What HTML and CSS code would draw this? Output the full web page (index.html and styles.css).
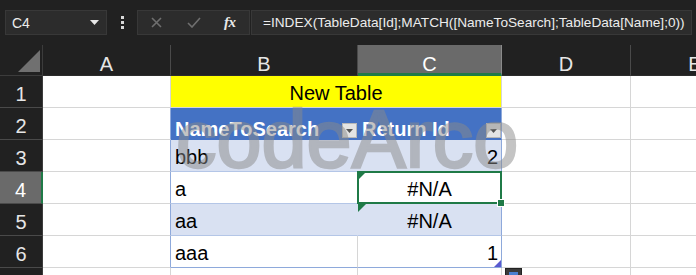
FILE: index.html
```html
<!DOCTYPE html>
<html>
<head>
<meta charset="utf-8">
<link rel="stylesheet" href="styles.css">
</head>
<body>
<div class="app">
  <div class="toolbar">
    <div class="namebox">
      <span class="nb-text">C4</span>
      <svg class="nb-arrow" width="9" height="5" viewBox="0 0 9 5"><path d="M0 0 L9 0 L4.5 5 Z" fill="#e8e8e8"/></svg>
    </div>
    <div class="dots">
      <svg width="3" height="13" viewBox="0 0 3 13"><rect x="0" y="0" width="3" height="3" fill="#d8d8d8"/><rect x="0" y="5" width="3" height="3" fill="#d8d8d8"/><rect x="0" y="10" width="3" height="3" fill="#d8d8d8"/></svg>
    </div>
    <div class="fb-icons">
      <svg class="ic-x" width="11" height="11" viewBox="0 0 11 11"><path d="M1 1 L10 10 M10 1 L1 10" stroke="#6f6f6f" stroke-width="1.6"/></svg>
      <svg class="ic-ok" width="14" height="11" viewBox="0 0 14 11"><path d="M1 6 L5 10 L13 1" stroke="#6f6f6f" stroke-width="1.6" fill="none"/></svg>
      <span class="ic-fx">fx</span>
    </div>
    <div class="formula">=INDEX(TableData[Id];MATCH([NameToSearch];TableData[Name];0))</div>
  </div>

  <div class="sheet">
    <div class="corner"><div class="corner-tri"></div></div>
    <div class="ch">A</div>
    <div class="ch">B</div>
    <div class="ch ch-sel">C</div>
    <div class="ch">D</div>
    <div class="ch">E</div>

    <div class="rh">1</div>
    <div class="c"></div>
    <div class="c title">New Table</div>
    <div class="c"></div>
    <div class="c"></div>

    <div class="rh">2</div>
    <div class="c tedge"></div>
    <div class="c th">NameToSearch<span class="dd"><svg width="7" height="4" viewBox="0 0 7 4"><path d="M0 0 L7 0 L3.5 4 Z" fill="#555"/></svg></span></div>
    <div class="c th thr">Return Id<span class="dd"><svg width="7" height="4" viewBox="0 0 7 4"><path d="M0 0 L7 0 L3.5 4 Z" fill="#555"/></svg></span></div>
    <div class="c"></div>
    <div class="c"></div>

    <div class="rh">3</div>
    <div class="c tedge"></div>
    <div class="c tb band">bbb</div>
    <div class="c tb tbr band num">2</div>
    <div class="c"></div>
    <div class="c"></div>

    <div class="rh rh-sel">4</div>
    <div class="c tedge"></div>
    <div class="c tb">a</div>
    <div class="c tb tbr ctr sel"><span class="err"></span>#N/A<span class="selbox"><span class="handle"></span></span></div>
    <div class="c"></div>
    <div class="c"></div>

    <div class="rh">5</div>
    <div class="c tedge"></div>
    <div class="c tb band">aa</div>
    <div class="c tb tbr band ctr"><span class="err"></span>#N/A</div>
    <div class="c"></div>
    <div class="c"></div>

    <div class="rh">6</div>
    <div class="c tedge"></div>
    <div class="c tb tlast">aaa</div>
    <div class="c tb tbr tlast num">1<span class="resize"></span></div>
    <div class="c"></div>
    <div class="c"></div>

    <div class="rh rh-7"></div>
    <div class="c c7"></div>
    <div class="c c7"></div>
    <div class="c c7 qa-cell"><span class="qa"><span class="qa-in"></span></span></div>
    <div class="c c7"></div>
    <div class="c c7"></div>
  </div>

  <div class="watermark">codeArco</div>
</div>
</body>
</html>
```

FILE: styles.css
```css
html, body {
  margin: 0;
  padding: 0;
  background: #212121;
}
.app {
  position: relative;
  width: 696px;
  height: 275px;
  overflow: hidden;
  background: #212121;
  font-family: "Liberation Sans", Arial, sans-serif;
}
.toolbar {
  height: 45px;
  box-sizing: border-box;
  padding: 10px 4px 0 5px;
  display: flex;
  align-items: flex-start;
}
.namebox {
  width: 102px;
  height: 25px;
  box-sizing: border-box;
  background: #2c2c2c;
  border: 1px solid #383838;
  display: flex;
  align-items: center;
  justify-content: space-between;
  padding: 0 7px 0 6px;
}
.nb-text {
  color: #ececec;
  font-size: 14px;
}
.dots {
  width: 30px;
  height: 25px;
  display: flex;
  align-items: center;
  justify-content: center;
}
.fb-icons {
  width: 113px;
  height: 25px;
  box-sizing: border-box;
  background: #2c2c2c;
  border: 1px solid #383838;
  display: flex;
  align-items: center;
  padding-left: 13px;
}
.ic-x { margin-right: 25px; }
.ic-ok { margin-right: 23px; }
.ic-fx {
  font-family: "Liberation Serif", serif;
  font-style: italic;
  font-weight: bold;
  font-size: 15px;
  color: #e8e8e8;
  letter-spacing: -0.5px;
}
.formula {
  flex: 1;
  height: 25px;
  box-sizing: border-box;
  margin-left: 1px;
  background: #2c2c2c;
  border: 1px solid #383838;
  color: #ececec;
  font-size: 13.65px;
  line-height: 23px;
  padding-left: 11px;
  white-space: nowrap;
  overflow: hidden;
}

/* sheet */
.sheet {
  display: grid;
  width: 760px;
  grid-template-columns: 43px 128px 187px 144px 129px 129px;
  grid-template-rows: 31px repeat(6, 32px) 1fr;
  height: 230px;
  background: #ffffff;
}
.corner {
  background: #212121;
  border-right: 1px solid #3c3c3c;
  border-bottom: 1px solid #3c3c3c;
  position: relative;
}
.corner-tri {
  position: absolute;
  right: 2px;
  bottom: 3px;
  width: 0;
  height: 0;
  border-left: 22px solid transparent;
  border-bottom: 22px solid #707070;
}
.ch {
  background: #212121;
  color: #e6e6e6;
  font-size: 20px;
  text-align: center;
  line-height: 20px;
  box-sizing: border-box;
  padding-top: 9px;
  border-right: 1px solid #4a4a4a;
  border-bottom: 1px solid #2c2c2c;
}
.ch-sel {
  background: #6a6a6a;
  color: #ffffff;
  border-bottom: 3px solid #1f7a47;
  border-right: 1px solid #8a8a8a;
}
.rh {
  background: #212121;
  color: #e6e6e6;
  font-size: 20px;
  line-height: 20px;
  text-align: center;
  box-sizing: border-box;
  padding-top: 8px;
  border-right: 1px solid #3c3c3c;
  border-bottom: 1px solid #4a4a4a;
}
.rh-sel {
  background: #6a6a6a;
  color: #ffffff;
  border-right: 2px solid #1f7a47;
}
.c {
  position: relative;
  box-sizing: border-box;
  border-right: 1px solid #d6d6d6;
  border-bottom: 1px solid #d6d6d6;
  font-size: 20px;
  line-height: 20px;
  color: #000000;
  display: flex;
  align-items: flex-end;
  padding: 0 4px 4px 4px;
  white-space: nowrap;
}
.title {
  grid-column: span 2;
  background: #ffff00;
  justify-content: center;
}
.tedge { border-right-color: #8ea9db; }
.th {
  background: #4472c4;
  color: #ffffff;
  font-weight: bold;
  border-right-color: #4472c4;
  border-bottom-color: #4472c4;
  padding-right: 0;
  padding-bottom: 0;
}
.th .dd {
  margin-left: auto;
  width: 15px;
  height: 15px;
  box-sizing: border-box;
  background: #e4e4e4;
  border: 1px solid #b8b8b8;
  display: flex;
  align-items: center;
  justify-content: center;
  margin-bottom: 1px;
}
.thr { border-right-color: #8ea9db; }
.tb {
  border-bottom-color: #b4c6e7;
}
.band {
  background: #d9e1f2;
  border-right-color: #d9e1f2;
}
.tbr { border-right-color: #8ea9db; }
.band.tbr { border-right-color: #8ea9db; }
.tlast { border-bottom-color: #8ea9db; }
.num { justify-content: flex-end; padding-right: 3px; }
.ctr { justify-content: center; }
.err {
  position: absolute;
  left: 0;
  top: 0;
  width: 0;
  height: 0;
  border-top: 8px solid #1f7a47;
  border-right: 8px solid transparent;
}
.sel { z-index: 2; }
.selbox {
  position: absolute;
  left: -1px;
  top: -1px;
  right: -1px;
  bottom: -1px;
  border: 2px solid #1f7a47;
  pointer-events: none;
}
.handle {
  position: absolute;
  right: -5px;
  bottom: -5px;
  width: 6px;
  height: 6px;
  background: #1f7a47;
  border: 1px solid #ffffff;
}
.resize {
  position: absolute;
  right: 0;
  bottom: 0;
  width: 0;
  height: 0;
  border-left: 7px solid transparent;
  border-bottom: 7px solid #5a5ad0;
}
.c7 { border-bottom: none; }
.qa {
  position: absolute;
  left: 147px;
  top: 0px;
  width: 17px;
  height: 17px;
  box-sizing: border-box;
  background: #3a3a3a;
  border: 1px solid #222;
  z-index: 3;
}
.qa-in {
  position: absolute;
  left: 3px;
  top: 3px;
  width: 9px;
  height: 6px;
  background: #4a7fd0;
}
.watermark {
  position: absolute;
  left: 176px;
  top: 99px;
  font-family: "Liberation Sans", Arial, sans-serif;
  font-size: 81px;
  line-height: 81px;
  color: #8a8a8a;
  -webkit-text-stroke: 2.5px #8a8a8a;
  opacity: 0.5;
  white-space: nowrap;
  pointer-events: none;
  z-index: 5;
}
```
